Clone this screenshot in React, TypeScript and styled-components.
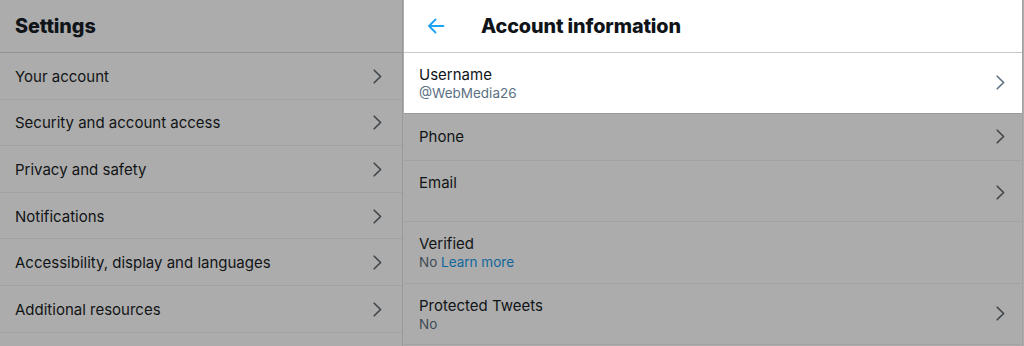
import React from 'react';
import styled, { createGlobalStyle } from 'styled-components';

const GlobalStyle = createGlobalStyle`
  html, body {
    margin: 0;
    padding: 0;
    background: #acacac;
    font-family: Inter, "Liberation Sans", Arial, sans-serif;
    -webkit-font-smoothing: antialiased;
  }
`;

const Page = styled.div`
  display: flex;
  width: 1024px;
  height: 346px;
  overflow: hidden;
  background: #acacac;
`;

const SettingsColumn = styled.div`
  width: 402px;
  flex-shrink: 0;
  border-right: 1px solid #9a9a9a;
  display: flex;
  flex-direction: column;
`;

const DetailColumn = styled.div`
  width: 618px;
  margin-left: 1px;
  border-right: 1px solid #a2a2a2;
  display: flex;
  flex-direction: column;
`;

const Header = styled.div<{ $light?: boolean }>`
  height: 53px;
  box-sizing: border-box;
  display: flex;
  align-items: center;
  padding: 0 15px;
  background: ${p => (p.$light ? '#ffffff' : 'transparent')};
  border-bottom: 1px solid ${p => (p.$light ? '#c9c9c9' : '#939393')};
`;

const Title = styled.h2`
  margin: 0;
  font-size: 19.8px;
  font-weight: 800;
  color: #0f1419;
  letter-spacing: -0.1px;
`;

const BackButton = styled.div`
  width: 62px;
  display: flex;
  align-items: center;
  padding-left: 8px;
  box-sizing: border-box;
  color: #1da1f2;
`;

const MenuItem = styled.div`
  height: 46.6px;
  box-sizing: border-box;
  display: flex;
  align-items: center;
  justify-content: space-between;
  padding: 1px 20px 0 15px;
  border-bottom: 1px solid #a2a2a2;
  font-size: 15px;
  color: #111416;
`;

const InfoRow = styled.div<{ $light?: boolean; $height: number; $top?: boolean }>`
  height: ${p => p.$height}px;
  box-sizing: border-box;
  display: flex;
  align-items: ${p => (p.$top ? 'flex-start' : 'center')};
  justify-content: space-between;
  padding: ${p => (p.$top ? '12px 17px 0 15px' : '0 17px 0 15px')};
  background: ${p => (p.$light ? '#ffffff' : 'transparent')};
  border-bottom: 1px solid ${p => (p.$light ? '#9a9a9a' : '#a2a2a2')};
`;

const InfoText = styled.div`
  display: flex;
  flex-direction: column;
  gap: 1px;
`;

const Label = styled.span<{ $light?: boolean }>`
  font-size: 15px;
  color: ${p => (p.$light ? '#0f1419' : '#111416')};
`;

const Sub = styled.span<{ $light?: boolean }>`
  font-size: 13.5px;
  color: ${p => (p.$light ? '#5b7083' : '#3e4a55')};
`;

const Link = styled.span`
  color: #11679c;
`;

const ChevronWrap = styled.div<{ $light?: boolean; $shift?: number }>`
  display: flex;
  color: ${p => (p.$light ? '#5b7083' : '#3d444a')};
  margin-top: ${p => p.$shift ?? 0}px;
`;

const Chevron = ({ light, shift }: { light?: boolean; shift?: number }) => (
  <ChevronWrap $light={light} $shift={shift}>
    <svg width="9" height="15" viewBox="0 0 9 15" fill="none">
      <path d="M1.2 1.2 L7.6 7.5 L1.2 13.8" stroke="currentColor" strokeWidth="1.6" strokeLinecap="round" strokeLinejoin="round" />
    </svg>
  </ChevronWrap>
);

const menu = [
  'Your account',
  'Security and account access',
  'Privacy and safety',
  'Notifications',
  'Accessibility, display and languages',
  'Additional resources',
];

const App: React.FC = () => {
  return (
    <>
      <GlobalStyle />
      <Page>
        <SettingsColumn>
          <Header>
            <Title>Settings</Title>
          </Header>
          {menu.map(item => (
            <MenuItem key={item}>
              {item}
              <Chevron />
            </MenuItem>
          ))}
        </SettingsColumn>

        <DetailColumn>
          <Header $light>
            <BackButton>
              <svg width="18" height="16" viewBox="0 0 18 16" fill="none">
                <path d="M16.5 8 H2 M8.5 1.5 L2 8 L8.5 14.5" stroke="currentColor" strokeWidth="1.8" strokeLinecap="round" strokeLinejoin="round" />
              </svg>
            </BackButton>
            <Title>Account information</Title>
          </Header>

          <InfoRow $light $height={60.5}>
            <InfoText>
              <Label $light>Username</Label>
              <Sub $light>@WebMedia26</Sub>
            </InfoText>
            <Chevron light />
          </InfoRow>

          <InfoRow $height={47}>
            <Label>Phone</Label>
            <Chevron />
          </InfoRow>

          <InfoRow $height={61.5} $top>
            <Label>Email</Label>
            <Chevron shift={12} />
          </InfoRow>

          <InfoRow $height={61.5}>
            <InfoText>
              <Label>Verified</Label>
              <Sub>
                No <Link>Learn more</Link>
              </Sub>
            </InfoText>
          </InfoRow>

          <InfoRow $height={61.5}>
            <InfoText>
              <Label>Protected Tweets</Label>
              <Sub>No</Sub>
            </InfoText>
            <Chevron />
          </InfoRow>
        </DetailColumn>
      </Page>
    </>
  );
};

export default App;
